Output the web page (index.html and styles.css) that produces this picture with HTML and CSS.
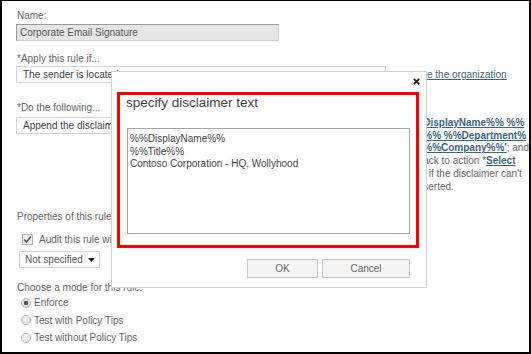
FILE: index.html
```html
<!DOCTYPE html>
<html lang="en">
<head>
    <meta charset="UTF-8">
    <title>Corporate Email Signature</title>
    <link rel="stylesheet" href="styles.css">
</head>
<body>
    <div class="frame">
        <div class="form">
            <div class="label">Name:</div>
            <div class="name-input">Corporate Email Signature</div>

            <div class="label label-gap">*Apply this rule if...</div>
            <div class="row">
                <div class="select">The sender is located...</div>
                <div class="desc">
                    <a class="link">e the organization</a>
                </div>
            </div>

            <div class="label label-do">*Do the following...</div>
            <div class="row row-do">
                <div class="select">Append the disclaimer...</div>
                <div class="desc">
                    <div><a class="link strong">DisplayName%% %%</a></div>
                    <div><a class="link strong">%% %%Department%</a></div>
                    <div><a class="link strong">%%Company%%'</a>; and</div>
                    <div>ack to action *<a class="link strong">Select</a></div>
                    <div><a class="link strong">&nbsp;</a> if the disclaimer can't</div>
                    <div>serted.</div>
                </div>
            </div>

            <div class="label label-props">Properties of this rule:</div>
            <div class="check-row">
                <span class="checkbox">
                    <svg width="9" height="9" viewBox="0 0 9 9"><path d="M1.2 4.6 L3.5 7 L8 1.5" fill="none" stroke="#555" stroke-width="1.6"/></svg>
                </span>
                <span>Audit this rule with severity level:</span>
            </div>
            <div class="dropdown">
                <span>Not specified</span>
                <svg width="7" height="4" viewBox="0 0 7 4"><path d="M0 0 H7 L3.5 4 Z" fill="#222"/></svg>
            </div>

            <div class="label label-mode">Choose a mode for this rule:</div>
            <div class="radio-row"><span class="radio checked"></span>Enforce</div>
            <div class="radio-row"><span class="radio"></span>Test with Policy Tips</div>
            <div class="radio-row"><span class="radio"></span>Test without Policy Tips</div>
        </div>

        <div class="dialog">
            <svg class="close" width="7" height="7" viewBox="0 0 7 7"><path d="M0.8 0.8 L6.2 6.2 M6.2 0.8 L0.8 6.2" stroke="#222" stroke-width="1.8"/></svg>
            <div class="highlight">
                <div class="dialog-title">specify disclaimer text</div>
                <div class="textarea">
                    <div>%%DisplayName%%</div>
                    <div>%%Title%%</div>
                    <div>Contoso Corporation - HQ, Wollyhood</div>
                </div>
            </div>
            <div class="buttons">
                <button class="btn btn-ok">OK</button>
                <button class="btn btn-cancel">Cancel</button>
            </div>
        </div>
    </div>
</body>
</html>
```

FILE: styles.css
```css
body {
    margin: 0;
    padding: 0;
    background: #fff;
    font-family: "Liberation Sans", Arial, sans-serif;
    font-size: 10px;
    color: #555;
}

.frame {
    position: relative;
    box-sizing: border-box;
    width: 531px;
    height: 354px;
    border-top: 1px solid #000;
    border-left: 2px solid #000;
    border-right: 2px solid #000;
    border-bottom: 2px solid #000;
    overflow: hidden;
}

.form {
    padding: 8px 0 0 14px;
}

.label {
    height: 13px;
    line-height: 13px;
    color: #666;
    padding-left: 1px;
}

.label-gap {
    margin-top: 11px;
}

.label-do {
    margin-top: 18px;
}

.label-props {
    margin-top: 17px;
}

.label-mode {
    margin-top: 13px;
}

.name-input {
    box-sizing: border-box;
    width: 263px;
    height: 17px;
    margin-top: 2px;
    padding-left: 3px;
    line-height: 15px;
    background: #e6e6e6;
    border: 1px solid #cfcfcf;
    border-top-color: #9a9a9a;
    border-left-color: #9a9a9a;
    color: #555;
}

.row {
    display: flex;
    align-items: flex-start;
    margin-top: 1px;
}

.row-do {
    margin-top: 3px;
}

.select {
    box-sizing: border-box;
    width: 370px;
    height: 17px;
    padding-left: 6px;
    line-height: 15px;
    border: 1px solid #d4d4d4;
    color: #444;
    white-space: nowrap;
}

.desc {
    margin-left: 41px;
    line-height: 12.7px;
    white-space: nowrap;
    color: #666;
}

.link {
    color: #3b6485;
    text-decoration: underline;
}

.row:not(.row-do) .desc {
    line-height: 17px;
}

.strong {
    font-weight: bold;
}

.check-row {
    display: flex;
    align-items: center;
    height: 13px;
    margin-top: 10px;
    padding-left: 6px;
    color: #666;
    white-space: nowrap;
}

.checkbox {
    box-sizing: border-box;
    width: 11px;
    height: 11px;
    margin-right: 6px;
    border: 1px solid #b4b4b4;
    background: #ececec;
    display: flex;
    align-items: center;
    justify-content: center;
}

.dropdown {
    box-sizing: border-box;
    display: flex;
    align-items: center;
    justify-content: space-between;
    width: 81px;
    height: 17px;
    margin: 5px 0 0 3px;
    padding: 0 4px 0 5px;
    border: 1px solid #d4d4d4;
    color: #555;
}

.radio-row {
    display: flex;
    align-items: center;
    height: 17.5px;
    padding-left: 5px;
    color: #666;
}

.radio {
    box-sizing: border-box;
    width: 10px;
    height: 10px;
    margin-right: 3px;
    border: 1px solid #b0b0b0;
    border-radius: 50%;
    background: radial-gradient(circle at 40% 35%, #fafafa, #dcdcdc);
}

.radio.checked {
    background: radial-gradient(circle, #555 0, #555 2px, #e4e4e4 2.5px);
}

.dialog {
    position: absolute;
    left: 109px;
    top: 70px;
    box-sizing: border-box;
    width: 316px;
    height: 217px;
    padding: 20px 0 0 5px;
    background: #fff;
    border: 1px solid #cfd4d8;
}

.close {
    position: absolute;
    top: 6px;
    right: 6px;
}

.highlight {
    box-sizing: border-box;
    width: 302px;
    height: 156px;
    border: 3px solid #f00;
    padding: 0 0 0 6px;
}

.dialog-title {
    height: 16px;
    line-height: 16px;
    font-size: 13.5px;
    color: #444;
}

.textarea {
    box-sizing: border-box;
    width: 283px;
    height: 106px;
    margin: 17px 0 0 1px;
    padding: 4px 0 0 2px;
    border: 1px solid #a6a6a6;
    line-height: 12.5px;
    color: #444;
}

.buttons {
    display: flex;
    justify-content: flex-end;
    gap: 4px;
    margin-top: 11px;
    padding-right: 16px;
}

.btn {
    box-sizing: border-box;
    height: 19px;
    padding: 0;
    background: #f4f4f4;
    border: 1px solid #c6c6c6;
    font-family: "Liberation Sans", Arial, sans-serif;
    font-size: 10px;
    color: #666;
}

.btn-ok {
    width: 71px;
}

.btn-cancel {
    width: 88px;
}
```
